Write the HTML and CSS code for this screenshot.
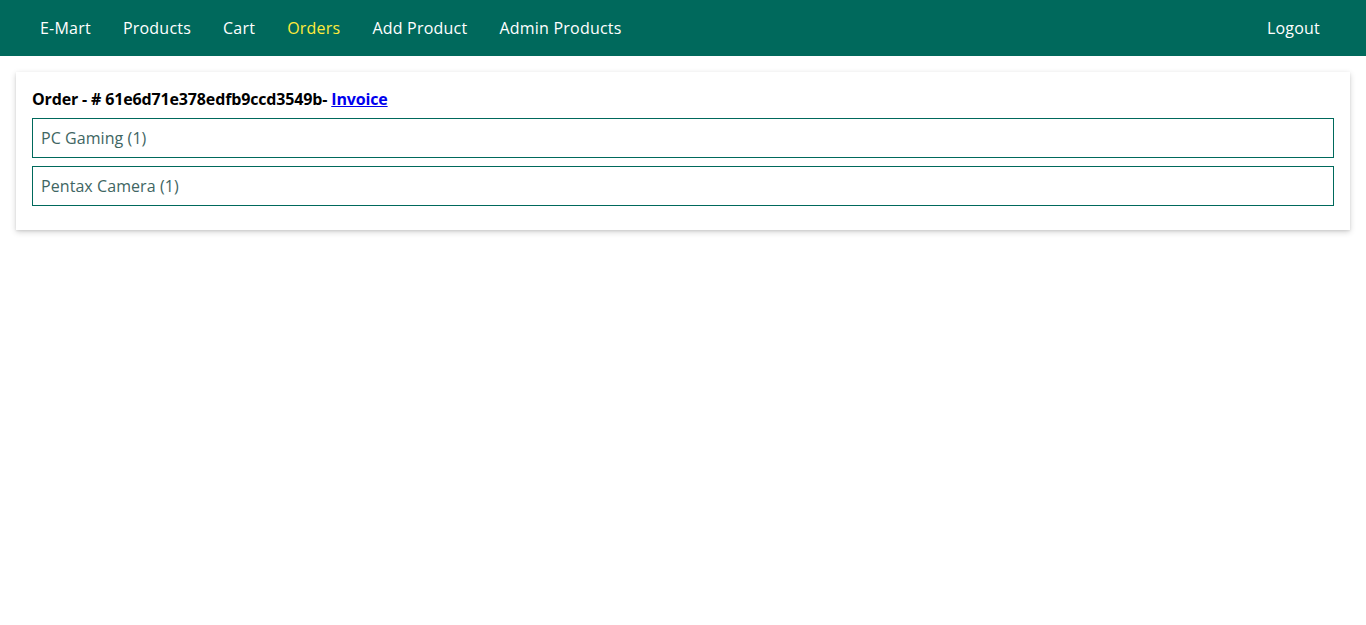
FILE: index.html
```html
<!DOCTYPE html>
<html>
<head>
<meta charset="utf-8">
<link rel="stylesheet" href="styles.css">
</head>
<body>
<nav class="nav">
  <ul class="nav-list">
    <li><a href="#">E-Mart</a></li>
    <li><a href="#">Products</a></li>
    <li><a href="#">Cart</a></li>
    <li><a href="#" class="active">Orders</a></li>
    <li><a href="#">Add Product</a></li>
    <li><a href="#">Admin Products</a></li>
  </ul>
  <ul class="nav-list nav-right">
    <li><a href="#">Logout</a></li>
  </ul>
</nav>
<main class="main">
  <section class="card">
    <h1 class="order-title">Order - # 61e6d71e378edfb9ccd3549b- <a href="#" class="invoice">Invoice</a></h1>
    <ul class="items">
      <li class="item">PC Gaming (1)</li>
      <li class="item">Pentax Camera (1)</li>
    </ul>
  </section>
</main>
</body>
</html>
```
FILE: styles.css
```css
* { box-sizing: border-box; }
body {
  margin: 0;
  font-family: "Open Sans", "Noto Sans", sans-serif;
  font-size: 16px;
  background: #fff;
  color: #000;
}
.nav {
  height: 56px;
  background: #00695c;
  display: flex;
  justify-content: space-between;
  align-items: center;
  padding: 0 30px 0 24px;
}
.nav-list {
  list-style: none;
  margin: 0;
  padding: 0;
  display: flex;
}
.nav-list a {
  display: block;
  padding: 0 16px;
  line-height: 56px;
  color: #fff;
  text-decoration: none;
  font-size: 16px;
  letter-spacing: 0.22px;
}
.nav-list a.active { color: #ffeb3b; }
.main {
  padding: 16px;
}
.card {
  background: #fff;
  box-shadow: 0 2px 6px rgba(0,0,0,0.18), 0 1px 2px rgba(0,0,0,0.08);
  padding: 16px 16px 24px;
}
.order-title {
  margin: 0;
  font-size: 16px;
  font-weight: 700;
  line-height: 22px;
  letter-spacing: -0.15px;
}
.invoice { color: #0000ee; }
.items {
  list-style: none;
  margin: 8px 0 0;
  padding: 0;
  display: flex;
  flex-direction: column;
  gap: 8px;
}
.item {
  border: 1px solid #00695c;
  height: 40px;
  padding: 0 8px;
  display: flex;
  align-items: center;
  color: #3f6663;
  font-size: 16px;
  letter-spacing: 0.07px;
}
```
